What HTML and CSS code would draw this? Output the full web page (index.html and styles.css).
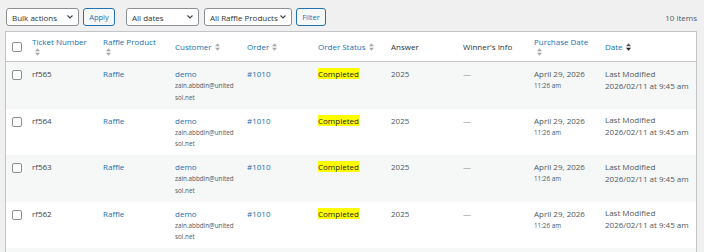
FILE: index.html
```html
<!DOCTYPE html>
<html lang="en">
<head>
<meta charset="utf-8">
<title>Raffle Tickets</title>
<link rel="stylesheet" href="styles.css">
</head>
<body>
<div class="wrap">
  <div class="toolbar">
    <div class="select w-bulk"><span>Bulk actions</span><svg class="chev" width="6" height="4" viewBox="0 0 6 4"><polyline points="0.5,0.5 3,3 5.5,0.5" fill="none" stroke="#3c434a" stroke-width="1.1"/></svg></div>
    <button class="btn w-apply">Apply</button>
    <div class="select w-dates"><span>All dates</span><svg class="chev" width="6" height="4" viewBox="0 0 6 4"><polyline points="0.5,0.5 3,3 5.5,0.5" fill="none" stroke="#3c434a" stroke-width="1.1"/></svg></div>
    <div class="select w-prod"><span>All Raffle Products</span><svg class="chev" width="6" height="4" viewBox="0 0 6 4"><polyline points="0.5,0.5 3,3 5.5,0.5" fill="none" stroke="#3c434a" stroke-width="1.1"/></svg></div>
    <button class="btn w-filter">Filter</button>
    <div class="count">10 items</div>
  </div>

  <table class="list">
    <colgroup>
      <col class="c-check"><col class="c71"><col class="c72"><col class="c72"><col class="c71"><col class="c73"><col class="c72"><col class="c71"><col class="c71"><col class="c-date">
    </colgroup>
    <thead>
      <tr>
        <th class="check"><span class="cb"></span></th>
        <th><a class="sort stack"><span class="lbl">Ticket Number</span><svg class="arr" width="5" height="8" viewBox="0 0 5 8"><polygon points="0,3.3 2.5,0.3 5,3.3" fill="#a7aaad"/><polygon points="0,4.7 5,4.7 2.5,7.7" fill="#a7aaad"/></svg></a></th>
        <th><a class="sort stack"><span class="lbl">Raffle Product</span><svg class="arr" width="5" height="8" viewBox="0 0 5 8"><polygon points="0,3.3 2.5,0.3 5,3.3" fill="#a7aaad"/><polygon points="0,4.7 5,4.7 2.5,7.7" fill="#a7aaad"/></svg></a></th>
        <th><a class="sort"><span class="lbl">Customer</span> <svg class="arr" width="5" height="8" viewBox="0 0 5 8"><polygon points="0,3.3 2.5,0.3 5,3.3" fill="#a7aaad"/><polygon points="0,4.7 5,4.7 2.5,7.7" fill="#a7aaad"/></svg></a></th>
        <th><a class="sort"><span class="lbl">Order</span> <svg class="arr" width="5" height="8" viewBox="0 0 5 8"><polygon points="0,3.3 2.5,0.3 5,3.3" fill="#a7aaad"/><polygon points="0,4.7 5,4.7 2.5,7.7" fill="#a7aaad"/></svg></a></th>
        <th><a class="sort"><span class="lbl">Order Status</span> <svg class="arr" width="5" height="8" viewBox="0 0 5 8"><polygon points="0,3.3 2.5,0.3 5,3.3" fill="#a7aaad"/><polygon points="0,4.7 5,4.7 2.5,7.7" fill="#a7aaad"/></svg></a></th>
        <th class="plain">Answer</th>
        <th class="plain">Winner's Info</th>
        <th><a class="sort stack"><span class="lbl">Purchase Date</span><svg class="arr" width="5" height="8" viewBox="0 0 5 8"><polygon points="0,3.3 2.5,0.3 5,3.3" fill="#a7aaad"/><polygon points="0,4.7 5,4.7 2.5,7.7" fill="#a7aaad"/></svg></a></th>
        <th><a class="sort"><span class="lbl">Date</span> <svg class="arr" width="5" height="8" viewBox="0 0 5 8"><polygon points="0,3.3 2.5,0.3 5,3.3" fill="#50575e"/><polygon points="0,4.7 5,4.7 2.5,7.7" fill="#1d2327"/></svg></a></th>
      </tr>
    </thead>
    <tbody>
      <tr class="alt">
        <td class="check"><span class="cb"></span></td>
        <td class="ticket">rf565</td>
        <td><a class="lnk">Raffle</a></td>
        <td><a class="lnk">demo</a><div class="small">zain.abbdin@united<wbr>sol.net</div></td>
        <td><a class="lnk">#1010</a></td>
        <td><mark class="status">Completed</mark></td>
        <td>2025</td>
        <td class="dash">—</td>
        <td>April 29, 2026<div class="small">11:26 am</div></td>
        <td class="date">Last Modified<br>2026/02/11 at 9:45 am</td>
      </tr>
      <tr>
        <td class="check"><span class="cb"></span></td>
        <td class="ticket">rf564</td>
        <td><a class="lnk">Raffle</a></td>
        <td><a class="lnk">demo</a><div class="small">zain.abbdin@united<wbr>sol.net</div></td>
        <td><a class="lnk">#1010</a></td>
        <td><mark class="status">Completed</mark></td>
        <td>2025</td>
        <td class="dash">—</td>
        <td>April 29, 2026<div class="small">11:26 am</div></td>
        <td class="date">Last Modified<br>2026/02/11 at 9:45 am</td>
      </tr>
      <tr class="alt">
        <td class="check"><span class="cb"></span></td>
        <td class="ticket">rf563</td>
        <td><a class="lnk">Raffle</a></td>
        <td><a class="lnk">demo</a><div class="small">zain.abbdin@united<wbr>sol.net</div></td>
        <td><a class="lnk">#1010</a></td>
        <td><mark class="status">Completed</mark></td>
        <td>2025</td>
        <td class="dash">—</td>
        <td>April 29, 2026<div class="small">11:26 am</div></td>
        <td class="date">Last Modified<br>2026/02/11 at 9:45 am</td>
      </tr>
      <tr>
        <td class="check"><span class="cb"></span></td>
        <td class="ticket">rf562</td>
        <td><a class="lnk">Raffle</a></td>
        <td><a class="lnk">demo</a><div class="small">zain.abbdin@united<wbr>sol.net</div></td>
        <td><a class="lnk">#1010</a></td>
        <td><mark class="status">Completed</mark></td>
        <td>2025</td>
        <td class="dash">—</td>
        <td>April 29, 2026<div class="small">11:26 am</div></td>
        <td class="date">Last Modified<br>2026/02/11 at 9:45 am</td>
      </tr>
      <tr class="alt filler">
        <td></td><td></td><td></td><td></td><td></td><td></td><td></td><td></td><td></td><td></td>
      </tr>
    </tbody>
  </table>
</div>
</body>
</html>
```
FILE: styles.css
```css
html, body {
  margin: 0;
  padding: 0;
}
body {
  background: #f0f0f1;
  font-family: "Open Sans", "Noto Sans", sans-serif;
  font-size: 8px;
  color: #50575e;
  overflow: hidden;
}
.wrap {
  padding: 8px 7px 0 5px;
}
.toolbar {
  display: flex;
  align-items: center;
  height: 18px;
  padding-left: 1px;
  margin-bottom: 5px;
}
.select {
  box-sizing: border-box;
  height: 18px;
  border: 1px solid #8c8f94;
  border-radius: 3px;
  background: #fff;
  color: #2c3338;
  display: flex;
  align-items: center;
  justify-content: space-between;
  padding: 0 5px 0 5px;
  white-space: nowrap;
}
.chev {
  flex: none;
}
.w-bulk { width: 73px; }
.w-dates { width: 73px; margin-left: 11px; }
.w-prod { width: 88px; margin-left: 5px; }
.btn {
  box-sizing: border-box;
  height: 18px;
  border: 1px solid #2271b1;
  border-radius: 3px;
  background: #f6f7f7;
  color: #2271b1;
  font-family: inherit;
  font-size: 7.5px;
  padding: 0;
  margin-left: 4px;
}
.w-apply { width: 32px; }
.w-filter { width: 30px; }
.count {
  margin-left: auto;
  color: #50575e;
}
.list {
  width: 692px;
  table-layout: fixed;
  border-collapse: separate;
  border-spacing: 0;
  border: 1px solid #c3c4c7;
  background: #fff;
  box-shadow: 0 1px 1px rgba(0,0,0,0.04);
}
.c-check { width: 21px; }
.c71 { width: 71px; }
.c72 { width: 72px; }
.c73 { width: 73px; }
.c-date { width: 96px; }
thead th {
  height: 30px;
  box-sizing: border-box;
  border-bottom: 1px solid #c3c4c7;
  text-align: left;
  font-weight: 400;
  vertical-align: middle;
  padding: 0 5px;
  line-height: 10px;
  color: #2c3338;
}
thead th.check {
  padding: 0 0 0 6px;
}
.sort {
  color: #2271b1;
  text-decoration: none;
}
.lbl {
  white-space: nowrap;
}
.arr {
  display: inline-block;
  vertical-align: -1px;
  margin-left: 1px;
}
.stack {
  display: block;
}
.stack .lbl {
  display: block;
}
.stack .arr {
  display: block;
  margin: 1px 0 0 3px;
}
.cb {
  display: block;
  box-sizing: border-box;
  width: 10px;
  height: 10px;
  border: 1px solid #8c8f94;
  border-radius: 2px;
  background: #fff;
}
tbody td {
  vertical-align: top;
  padding: 5px 5px 5px 5px;
  line-height: 13px;
  color: #50575e;
  height: 36px;
}
tbody td.check {
  padding: 8px 0 0 6px;
}
tbody tr.alt td {
  background: #f6f7f7;
}
.ticket {
  color: #3c434a;
}
.lnk {
  color: #2271b1;
  text-decoration: none;
}
.small {
  font-size: 6.3px;
  line-height: 11.6px;
  color: #50575e;
}
.status {
  background: #ffff00;
  color: #1d2327;
  padding: 0;
}
.dash {
  color: #8c8f94;
}
td.date {
  line-height: 12px;
  padding-top: 5.5px;
}
```
